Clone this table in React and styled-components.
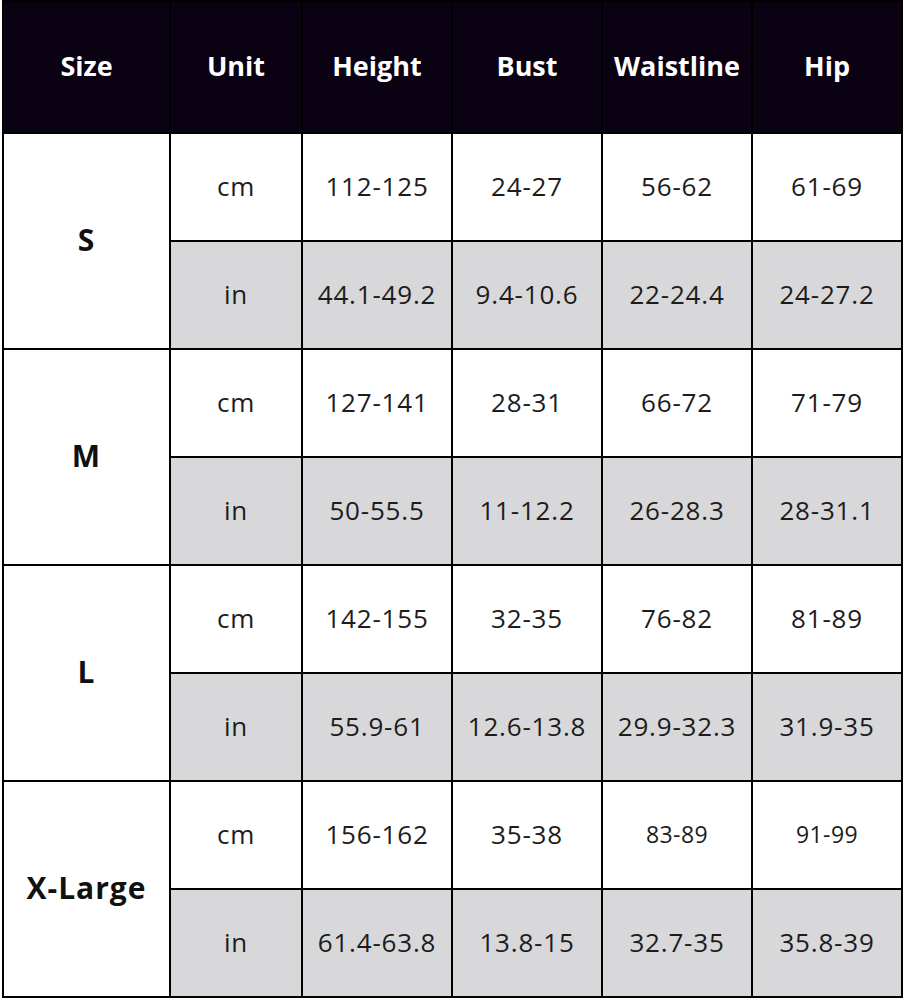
import styled, { createGlobalStyle } from "styled-components"

const GlobalStyle = createGlobalStyle`
	html, body {
		margin: 0;
		padding: 0;
		background: #ffffff;
	}
	body {
		font-family: "Open Sans", "Noto Sans", "Liberation Sans", sans-serif;
	}
`

const headers = ["Size", "Unit", "Height", "Bust", "Waistline", "Hip"]

const sizes = [
	{
		name: "S",
		cm: ["112-125", "24-27", "56-62", "61-69"],
		inch: ["44.1-49.2", "9.4-10.6", "22-24.4", "24-27.2"]
	},
	{
		name: "M",
		cm: ["127-141", "28-31", "66-72", "71-79"],
		inch: ["50-55.5", "11-12.2", "26-28.3", "28-31.1"]
	},
	{
		name: "L",
		cm: ["142-155", "32-35", "76-82", "81-89"],
		inch: ["55.9-61", "12.6-13.8", "29.9-32.3", "31.9-35"]
	},
	{
		name: "X-Large",
		cm: ["156-162", "35-38", "83-89", "91-99"],
		inch: ["61.4-63.8", "13.8-15", "32.7-35", "35.8-39"],
		smallCm: [2, 3]
	}
]

const Chart = styled.div`
	display: grid;
	grid-template-columns: 165px 130px 148px 148px 148px 148px;
	grid-template-rows: 130px repeat(8, 106px);
	gap: 2px;
	padding: 2px;
	width: max-content;
	margin: 0 0 0 2px;
	background: #000000;
`

const HeadCell = styled.div`
	display: flex;
	align-items: center;
	justify-content: center;
	background: #0a0212;
	color: #ffffff;
	font-size: 27px;
	font-weight: 700;
	padding-bottom: 4px;
`

const SizeCell = styled.div`
	grid-row: span 2;
	display: flex;
	align-items: center;
	justify-content: center;
	background: #ffffff;
	color: #111111;
	font-size: 30px;
	font-weight: 700;
	letter-spacing: 1px;
	padding-bottom: 4px;
`

const Cell = styled.div`
	display: flex;
	align-items: center;
	justify-content: center;
	background: ${p => (p.$shaded ? "#d8d8da" : "#ffffff")};
	color: #1c1c1c;
	font-size: ${p => (p.$small ? "23px" : "26px")};
	letter-spacing: ${p => (p.$small ? "0.4px" : "0.8px")};
	padding-bottom: 2px;
`

export default function App() {
	return (
		<>
			<GlobalStyle />
			<Chart>
				{headers.map(h => (
					<HeadCell key={h}>{h}</HeadCell>
				))}
				{sizes.map(s => (
					<Rows key={s.name} size={s} />
				))}
			</Chart>
		</>
	)
}

function Rows({ size }) {
	const small = size.smallCm || []
	return (
		<>
			<SizeCell>{size.name}</SizeCell>
			<Cell>cm</Cell>
			{size.cm.map((v, i) => (
				<Cell key={"cm" + i} $small={small.includes(i)}>
					{v}
				</Cell>
			))}
			<Cell $shaded>in</Cell>
			{size.inch.map((v, i) => (
				<Cell key={"in" + i} $shaded>
					{v}
				</Cell>
			))}
		</>
	)
}
